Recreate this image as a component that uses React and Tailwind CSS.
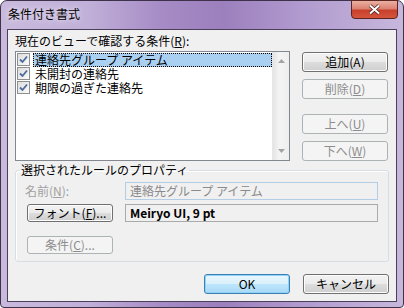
import React from "react";

const FONT = { fontFamily: '"Noto Sans CJK JP", "Noto Sans", sans-serif' };

function Btn({ children, disabled, primary, className = "" }) {
  let look =
    "border-[#707070] bg-[linear-gradient(#f2f2f2_0%,#ebebeb_50%,#dddddd_50%,#cfcfcf_100%)] text-black shadow-[inset_0_0_0_1px_#fcfcfc]";
  if (disabled) look = "border-[#adb2b5] bg-[#f4f4f4] text-[#8d8d8d]";
  if (primary)
    look =
      "border-[#3c7fb1] bg-[linear-gradient(#eaf6fd_0%,#d9f0fc_50%,#bee6fd_50%,#a7d9f5_100%)] text-black shadow-[inset_0_0_0_1px_#8fd4f8]";
  return (
    <div
      className={`flex items-center justify-center w-[86px] rounded-[3px] border text-[12px] leading-none ${look} ${className}`}
    >
      {children}
    </div>
  );
}

function Check() {
  return (
    <div className="w-[13px] h-[13px] border border-[#8e8f8f] bg-[linear-gradient(135deg,#dcdcdc,#fbfbfb)] flex items-center justify-center">
      <svg width="9" height="9" viewBox="0 0 9 9">
        <path d="M1 4.5 L3.5 7 L8 1.5" fill="none" stroke="#4d6a9c" strokeWidth="1.8" />
      </svg>
    </div>
  );
}

function Row({ label, selected }) {
  return (
    <div className="flex h-[14px] pl-[1px] items-start">
      <Check />
      <div
        className={`ml-[3px] flex-1 h-[14px] pl-[2px] text-[12px] leading-[14px] text-black ${
          selected ? "bg-[#a9cff1] outline outline-1 outline-dotted outline-black -outline-offset-1" : ""
        }`}
      >
        {label}
      </div>
    </div>
  );
}

export default function App() {
  return (
    <div className="w-[404px] h-[308px] bg-white" style={FONT}>
      <div className="w-[404px] h-[308px] rounded-t-[7px] rounded-b-[4px] border border-[#3d3249] bg-[linear-gradient(90deg,#c9badd_0%,#c0afd8_22%,#a68bc5_40%,#9c7fbd_55%,#b19bcf_75%,#c7b7dc_100%)] flex flex-col">
        <div className="h-[28px] flex items-start">
          <span className="ml-[7px] mt-[6px] text-[12px] leading-[14px] text-black [text-shadow:0_0_6px_#ffffff]">
            条件付き書式
          </span>
          <div className="ml-auto mr-[5px] mt-[-1px] w-[47px] h-[19px] rounded-b-[4px] border border-[#5b2622] bg-[linear-gradient(#eab0a2_0%,#dc8272_45%,#c8402d_55%,#d5553c_100%)] flex items-center justify-center">
            <svg width="13" height="11" viewBox="0 0 13 11">
              <path d="M2 1.5 L11 9.5 M11 1.5 L2 9.5" stroke="#4a2320" strokeWidth="3.6" />
              <path d="M2 1.5 L11 9.5 M11 1.5 L2 9.5" stroke="#ffffff" strokeWidth="2" />
            </svg>
          </div>
        </div>

        <div className="mx-[6px] h-[273px] border border-[#4b3f5c] bg-[#f0f0f0] flex flex-col">
          <div className="mt-[4px] ml-[7px] text-[12px] leading-[14px] text-black">
            現在のビューで確認する条件(<u>R</u>):
          </div>

          <div className="mt-[3px] flex items-start">
            <div className="ml-[7px] w-[275px] h-[110px] border border-[#828790] bg-white flex">
              <div className="flex-1 pt-[1px] flex flex-col">
                <Row label="連絡先グループ アイテム" selected />
                <Row label="未開封の連絡先" />
                <Row label="期限の過ぎた連絡先" />
              </div>
              <div className="w-[17px] border-l border-[#e6e6e6] bg-[linear-gradient(90deg,#e4e4e4,#f4f4f4_40%,#eeeeee)] flex flex-col justify-between items-center py-[7px]">
                <svg width="7" height="4" viewBox="0 0 7 4">
                  <path d="M0 4 L3.5 0 L7 4 Z" fill="#a3a3a3" />
                </svg>
                <svg width="7" height="4" viewBox="0 0 7 4">
                  <path d="M0 0 L3.5 4 L7 0 Z" fill="#a3a3a3" />
                </svg>
              </div>
            </div>

            <div className="ml-[12px] mt-[1px] flex flex-col">
              <Btn className="h-[20px]">追加(A)</Btn>
              <Btn disabled className="h-[20px] mt-[7px]">
                削除(<u>D</u>)
              </Btn>
              <Btn disabled className="h-[20px] mt-[15px]">
                上へ(<u>U</u>)
              </Btn>
              <Btn disabled className="h-[20px] mt-[7px]">
                下へ(<u>W</u>)
              </Btn>
            </div>
          </div>

          <fieldset className="mt-[2px] ml-[7px] w-[374px] border border-[#d5dfe5] rounded-[3px] pb-[7px] shadow-[inset_1px_1px_0_#ffffff]">
            <legend className="ml-[4px] px-[1px] text-[12px] leading-[14px] text-black">
              選択されたルールのプロパティ
            </legend>
            <div className="mt-[5px] flex items-center pl-[9px]">
              <span className="w-[100px] text-[12px] leading-[14px] text-[#a0a0a0]">
                名前(<u>N</u>):
              </span>
              <div className="w-[253px] h-[18px] border border-[#b3cde6] bg-[#f0f0f0] pl-[4px] text-[12px] leading-[16px] text-[#8a8a8a]">
                連絡先グループ アイテム
              </div>
            </div>
            <div className="mt-[4px] flex items-center pl-[11px]">
              <Btn className="h-[18px]">
                フォント(<u>F</u>)...
              </Btn>
              <div className="ml-[12px] w-[253px] h-[18px] border border-[#aaaaaa] bg-[#f0f0f0] pl-[4px] text-[12px] leading-[16px] font-bold text-black">
                Meiryo UI, 9 pt
              </div>
            </div>
            <div className="mt-[14px] pl-[11px]">
              <Btn disabled className="h-[18px]">
                条件(<u>C</u>)...
              </Btn>
            </div>
          </fieldset>

          <div className="mt-[12px] mr-[7px] flex justify-end gap-[13px]">
            <Btn primary className="h-[20px]">OK</Btn>
            <Btn className="h-[20px]">キャンセル</Btn>
          </div>
        </div>
      </div>
    </div>
  );
}
